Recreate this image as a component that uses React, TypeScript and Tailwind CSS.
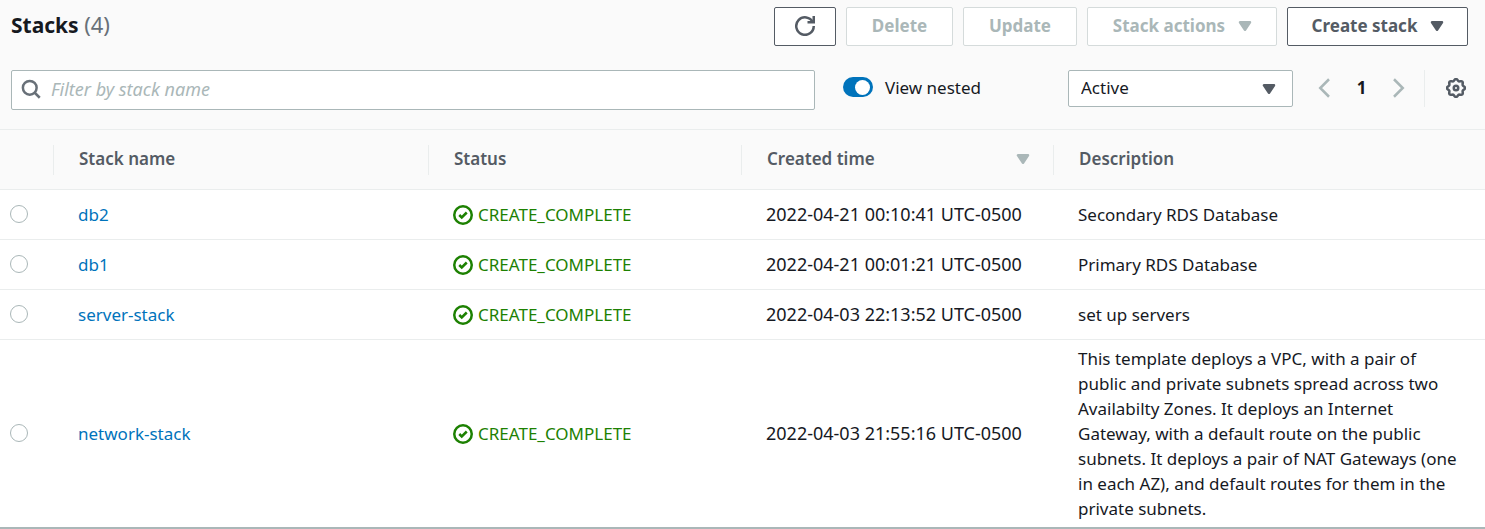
import React, { useState } from "react";

type Stack = { name: string; created: string; description: string };

const stacks: Stack[] = [
  { name: "db2", created: "2022-04-21 00:10:41 UTC-0500", description: "Secondary RDS Database" },
  { name: "db1", created: "2022-04-21 00:01:21 UTC-0500", description: "Primary RDS Database" },
  { name: "server-stack", created: "2022-04-03 22:13:52 UTC-0500", description: "set up servers" },
  {
    name: "network-stack",
    created: "2022-04-03 21:55:16 UTC-0500",
    description:
      "This template deploys a VPC, with a pair of public and private subnets spread across two Availabilty Zones. It deploys an Internet Gateway, with a default route on the public subnets. It deploys a pair of NAT Gateways (one in each AZ), and default routes for them in the private subnets.",
  },
];

function Icon({ children, className = "" }: { children: React.ReactNode; className?: string }) {
  return (
    <svg
      viewBox="0 0 16 16"
      fill="none"
      stroke="currentColor"
      strokeWidth="2"
      aria-hidden="true"
      className={`size-5 shrink-0 ${className}`}
    >
      {children}
    </svg>
  );
}

function Caret({ className = "" }: { className?: string }) {
  return (
    <Icon className={className}>
      <path d="M4 5h8l-4 6-4-6z" fill="currentColor" strokeLinejoin="round" />
    </Icon>
  );
}

// Cog outline with eight rounded teeth
const GEAR = Array.from({ length: 96 }, (_, i) => {
  const a = (i / 96) * 2 * Math.PI;
  const r = 6.5 + 0.7 * Math.cos(8 * a);
  return `${(8 + r * Math.cos(a)).toFixed(2)},${(8 + r * Math.sin(a)).toFixed(2)}`;
}).join(" ");

function Button({
  children,
  disabled = false,
  className,
  label,
}: {
  children: React.ReactNode;
  disabled?: boolean;
  className: string;
  label?: string;
}) {
  const tone = disabled ? "border-[#d5dbdb] text-[#aab7b8]" : "border-[#545b64] text-[#545b64]";
  return (
    <button
      type="button"
      disabled={disabled}
      aria-label={label}
      className={`flex h-[39px] items-center justify-center gap-2.5 rounded-xs border bg-white pb-0.5 font-bold whitespace-nowrap ${tone} ${className}`}
    >
      {children}
    </button>
  );
}

function HeaderCell({ children, className = "" }: { children: React.ReactNode; className?: string }) {
  return (
    <th scope="col" className={`p-0 text-left font-semibold ${className}`}>
      <div className="flex h-[30px] items-center justify-between border-l border-[#eaeded] pr-5 pb-0.5 pl-[25px]">
        {children}
      </div>
    </th>
  );
}

export default function App() {
  const [nested, setNested] = useState(true);
  const [selected, setSelected] = useState("");

  return (
    <main className="border-b-2 border-[#aab7b8] bg-white font-['Noto_Sans','Open_Sans',sans-serif] text-[17px] leading-[25px] text-[#16191f]">
      <header className="bg-[#fafafa] pt-[7px] pr-[17px] pb-[19px] pl-[11px]">
        <div className="flex items-start justify-between">
          <h1 className="pt-1 text-[21px] leading-[26px] font-bold">
            Stacks <span className="text-[22px] font-normal text-[#687078]">(4)</span>
          </h1>
          <div className="flex gap-2.5">
            <Button className="w-[62px]" label="Refresh">
              <Icon>
                <path d="M10 5h5V0" />
                <path d="M15 8a7 7 0 1 1-.7-3" />
              </Icon>
            </Button>
            <Button disabled className="min-w-[107px]">Delete</Button>
            <Button disabled className="min-w-[114px]">Update</Button>
            <Button disabled className="min-w-[190px] pl-1">
              Stack actions <Caret />
            </Button>
            <Button className="min-w-[181px] pl-1">
              Create stack <Caret />
            </Button>
          </div>
        </div>

        <div className="mt-6 flex items-start">
          <label className="flex h-10 flex-1 items-center gap-2.5 rounded-xs border border-[#aab7b8] bg-white pb-0.5 pl-[9px]">
            <Icon className="text-[#687078]">
              <circle cx="7" cy="7" r="5.500" />
              <path d="m11 11 4 4" />
            </Icon>
            <input
              type="text"
              aria-label="Filter by stack name"
              placeholder="Filter by stack name"
              className="min-w-0 flex-1 bg-transparent text-[18px] outline-none placeholder:text-[#aab7b8] placeholder:italic"
            />
          </label>
          <label className="ml-7 flex h-[34px] w-[225px] items-center gap-3">
            <input
              type="checkbox"
              role="switch"
              checked={nested}
              onChange={(e) => setNested(e.target.checked)}
              className="flex h-5 w-[30px] appearance-none items-center rounded-full bg-[#687078] px-[3px] before:size-[15px] before:rounded-full before:bg-white checked:justify-end checked:bg-[#0073bb]"
            />
            View nested
          </label>
          <div className="grid w-[225px] items-center">
            <select
              aria-label="Stack status"
              defaultValue="Active"
              className="col-start-1 row-start-1 h-[37px] appearance-none rounded-xs border border-[#aab7b8] bg-white pr-10 pb-0.5 pl-3"
            >
              <option>Active</option>
              <option>Deleted</option>
            </select>
            <Caret className="pointer-events-none col-start-1 row-start-1 mr-3.5 justify-self-end text-[#545b64]" />
          </div>
          <nav aria-label="Pagination" className="flex h-[37px] items-center pb-0.5 pl-[21px] text-[#aab7b8]">
            <button type="button" aria-label="Previous page">
              <Icon><path d="M12 1 5 8l7 7" /></Icon>
            </button>
            <span className="w-[55px] text-center font-bold text-[#16191f]">1</span>
            <button type="button" aria-label="Next page">
              <Icon><path d="m4 1 7 7-7 7" /></Icon>
            </button>
          </nav>
          <div className="ml-[15px] flex h-[37px] items-center border-l border-[#eaeded] pr-0.5 pb-0.5 pl-[21px]">
            <button type="button" aria-label="Preferences" className="text-[#545b64]">
              <Icon>
                <polygon points={GEAR} />
                <circle cx="8" cy="8" r="1.800" />
              </Icon>
            </button>
          </div>
        </div>
      </header>

      <table className="w-full table-fixed border-collapse">
        <thead>
          <tr className="h-[60px] border-y border-[#eaeded] bg-[#fafafa] text-[#545b64]">
            <th scope="col" aria-label="Select" className="w-[53px] p-0" />
            <HeaderCell className="w-[375px]">Stack name</HeaderCell>
            <HeaderCell className="w-[313px]">Status</HeaderCell>
            <HeaderCell className="w-[312px]">
              Created time <Caret className="text-[#aab7b8]" />
            </HeaderCell>
            <HeaderCell>Description</HeaderCell>
          </tr>
        </thead>
        <tbody>
          {stacks.map((s) => (
            <tr key={s.name} className="h-[50px] border-b border-[#eaeded] last:border-b-0">
              <td className="pt-1 pb-1.5 pl-2.5">
                <input
                  type="radio"
                  name="stack"
                  aria-label={s.name}
                  checked={selected === s.name}
                  onChange={() => setSelected(s.name)}
                  className="block size-[18px] appearance-none rounded-full border border-[#aab7b8] bg-white checked:border-[5px] checked:border-[#0073bb]"
                />
              </td>
              <td className="py-1.5 pl-[25px]">
                <a href="#" className="text-[#0073bb]">{s.name}</a>
              </td>
              <td className="py-1.5 pl-[25px] text-[#1d8102]">
                <span className="flex items-center gap-[5px]">
                  <Icon>
                    <circle cx="8" cy="8" r="7" />
                    <path d="m5 8 2 2 4-4" />
                  </Icon>
                  CREATE_COMPLETE
                </span>
              </td>
              <td className="py-1.5 pl-[25px] text-[18px] whitespace-nowrap">{s.created}</td>
              <td className="py-1.5 pr-5 pl-[25px]">{s.description}</td>
            </tr>
          ))}
        </tbody>
      </table>
    </main>
  );
}
